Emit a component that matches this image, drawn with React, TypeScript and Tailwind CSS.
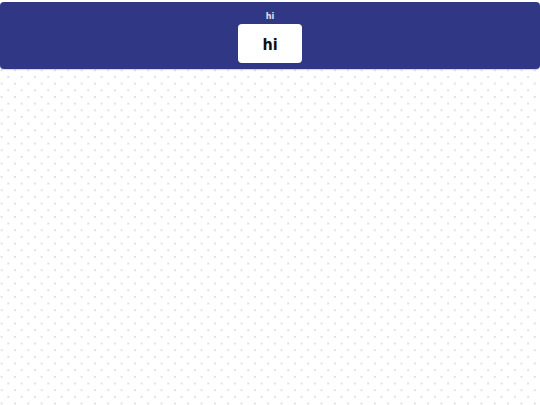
export default function App() {
  return (
    <div
      className="min-h-[405px] w-full bg-white bg-[radial-gradient(circle,#e0e0e0_0.8px,transparent_1.1px),radial-gradient(circle,#e0e0e0_0.8px,transparent_1.1px)] bg-[size:13.333px_13.333px] bg-[position:1.667px_1.667px,8.333px_8.333px]"
      style={{ fontFamily: "'DejaVu Sans Condensed', 'DejaVu Sans', sans-serif" }}
    >
      <header className="mt-[2px] flex h-[67px] flex-col items-center rounded-[4px] bg-[#303886] shadow-[0_1px_1px_rgba(120,130,220,0.35)]">
        <span className="mt-[9px] text-[9px] font-bold leading-[11px] text-white/85">hi</span>
        <div className="mt-[2px] flex h-[39px] w-[64px] items-center justify-center rounded-[4px] bg-white pt-[2px]">
          <span className="text-[16px] font-bold text-[#111]">hi</span>
        </div>
      </header>
    </div>
  );
}
